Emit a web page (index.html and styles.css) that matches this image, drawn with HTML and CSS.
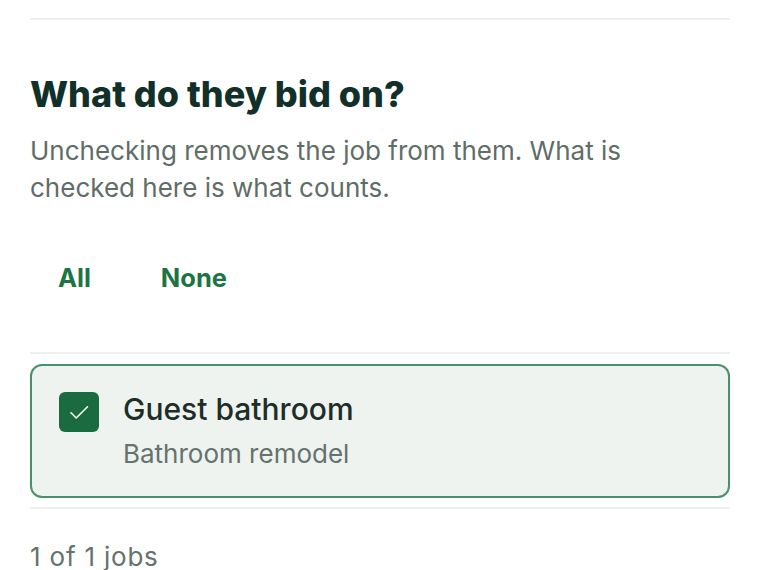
FILE: index.html
```html
<!DOCTYPE html>
<html lang="en">
<head>
<meta charset="utf-8">
<title>What do they bid on?</title>
<link rel="stylesheet" href="styles.css">
</head>
<body>
<main class="panel">
  <hr class="rule">
  <h2 class="title">What do they bid on?</h2>
  <p class="lead">Unchecking removes the job from them. What is checked here is what counts.</p>
  <div class="quick">
    <button class="quick-btn" type="button">All</button>
    <button class="quick-btn" type="button">None</button>
  </div>
  <ul class="jobs">
    <li class="job is-checked">
      <span class="check" aria-hidden="true">
        <svg viewBox="0 0 24 24" width="24" height="24"><path d="M4 12.8l5.2 5.2L20.5 6.8" fill="none" stroke="#ffffff" stroke-width="1.6" stroke-linecap="round" stroke-linejoin="round"/></svg>
      </span>
      <span class="job-text">
        <span class="job-name">Guest bathroom</span>
        <span class="job-type">Bathroom remodel</span>
      </span>
    </li>
  </ul>
  <p class="count">1 of 1 jobs</p>
</main>
</body>
</html>
```

FILE: styles.css
```css
* { box-sizing: border-box; }
html, body { margin: 0; padding: 0; background: #ffffff; }
body { font-family: "Inter", "Noto Sans", sans-serif; color: #14302a; }
.panel { padding: 18px 30px 0 30px; }
.rule { border: 0; height: 2px; background: #eef0ef; margin: 0; }
.title {
  margin: 52px 0 0 0;
  font-size: 36px;
  line-height: 44px;
  font-weight: 800;
  color: #12302a;
  letter-spacing: 0;
}
.lead {
  margin: 16px 0 0 0;
  font-size: 26px;
  line-height: 37px;
  color: #5f6d68;
  max-width: 640px;
}
.quick { display: flex; gap: 14px; margin-top: 56px; }
.quick-btn {
  background: none; border: 0; padding: 0 28px; cursor: pointer;
  font-family: inherit; font-size: 25.5px; line-height: 32px; font-weight: 700;
  color: #1d7443;
}
.jobs {
  list-style: none; margin: 58px 0 0 0; padding: 10px 0 9px 0;
  border-top: 2px solid #eef0ef; border-bottom: 2px solid #eef0ef;
}
.job {
  display: flex; align-items: flex-start; gap: 24px;
  padding: 26px 27px 26px 27px;
  border: 2px solid #4a9169; border-radius: 12px;
  background: #eef3ef;
}
.check {
  flex: none; width: 40px; height: 40px; border-radius: 6px;
  background: #1b6b40; display: flex; align-items: center; justify-content: center;
}
.job-text { display: flex; flex-direction: column; }
.job-name { font-size: 30px; line-height: 36px; font-weight: 500; color: #1d2d28; margin-top: -1px; }
.job-type { font-size: 26px; line-height: 32px; color: #65726d; margin-top: 11px; }
.count { margin: 32px 0 0 0; font-size: 26px; line-height: 32px; color: #65726d; letter-spacing: 0.8px; }
```
